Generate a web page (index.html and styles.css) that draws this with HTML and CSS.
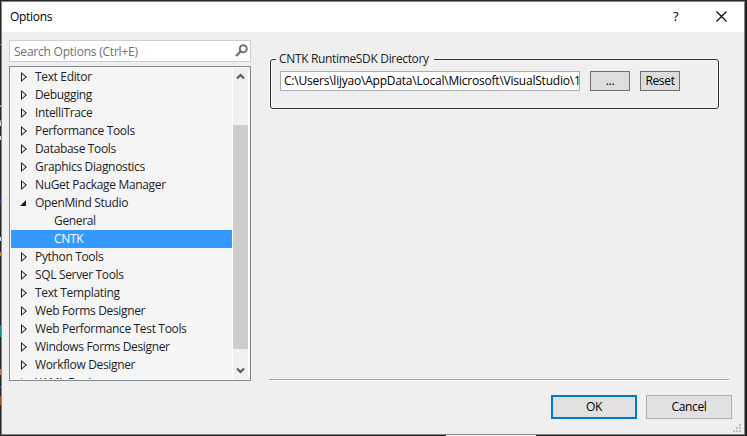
FILE: index.html
```
<!DOCTYPE html>
<html lang="en">
<head>
<meta charset="utf-8">
<title>Options</title>
<link rel="stylesheet" href="styles.css">
</head>
<body>
<div class="dialog">
  <header class="titlebar">
    <span class="title">Options</span>
    <span class="help">?</span>
    <svg class="close" width="11" height="11" viewBox="0 0 11 11"><path d="M.5 .5l10 10M10.500 .5l-10 10" fill="none" stroke="#000" stroke-width="1.1"/></svg>
  </header>
  <main class="content">
    <aside class="sidebar">
      <div class="search">
        <span>Search Options (Ctrl+E)</span>
        <svg width="13" height="13" viewBox="0 0 13 13"><circle cx="8.300" cy="4.700" r="3.500" fill="none" stroke="#717171" stroke-width="2"/><path d="M5.700 7.300L1 12" stroke="#717171" stroke-width="2.400"/></svg>
      </div>
      <div class="tree">
        <ul class="items">
          <li><i class="arrow"></i><span>Text Editor</span></li>
          <li><i class="arrow"></i><span>Debugging</span></li>
          <li><i class="arrow"></i><span>IntelliTrace</span></li>
          <li><i class="arrow"></i><span>Performance Tools</span></li>
          <li><i class="arrow"></i><span>Database Tools</span></li>
          <li><i class="arrow"></i><span>Graphics Diagnostics</span></li>
          <li><i class="arrow"></i><span>NuGet Package Manager</span></li>
          <li><i class="arrow open"></i><span>OpenMind Studio</span></li>
          <li class="child"><span>General</span></li>
          <li class="child selected"><span>CNTK</span></li>
          <li><i class="arrow"></i><span>Python Tools</span></li>
          <li><i class="arrow"></i><span>SQL Server Tools</span></li>
          <li><i class="arrow"></i><span>Text Templating</span></li>
          <li><i class="arrow"></i><span>Web Forms Designer</span></li>
          <li><i class="arrow"></i><span>Web Performance Test Tools</span></li>
          <li><i class="arrow"></i><span>Windows Forms Designer</span></li>
          <li><i class="arrow"></i><span>Workflow Designer</span></li>
          <li><i class="arrow"></i><span>XAML Designer</span></li>
        </ul>
        <div class="scrollbar">
          <svg width="9" height="7" viewBox="0 0 9 7"><path d="M1 5.500L4.500 2L8 5.500" fill="none" stroke="#555" stroke-width="2"/></svg>
          <div class="thumb"></div>
          <svg class="down" width="9" height="7" viewBox="0 0 9 7"><path d="M1 1.500L4.500 5L8 1.500" fill="none" stroke="#555" stroke-width="2"/></svg>
        </div>
      </div>
    </aside>
    <section class="page">
      <fieldset class="group">
        <legend>CNTK RuntimeSDK Directory</legend>
        <div class="path"><span>C:\Users\lijyao\AppData\Local\Microsoft\VisualStudio\14.0</span></div>
        <button class="small">...</button>
        <button class="small">Reset</button>
      </fieldset>
      <div class="rule"></div>
    </section>
  </main>
  <footer class="actions">
    <button class="primary">OK</button>
    <button>Cancel</button>
  </footer>
  <svg class="grip" width="8" height="8" viewBox="0 0 8 8" fill="#bfbfbf"><path d="M6 0h2v2h-2zM3 3h2v2h-2zM6 3h2v2h-2zM0 6h2v2h-2zM3 6h2v2h-2zM6 6h2v2h-2z"/></svg>
</div>
</body>
</html>
```
FILE: styles.css
```
* { box-sizing: border-box; }
body {
  margin: 0;
  width: 747px;
  height: 436px;
  padding: 1px 2px 1px 1px;
  overflow: hidden;
  font: 12px "Open Sans", "Noto Sans", sans-serif;
  letter-spacing: -0.34px;
  color: #1e1e1e;
  background:
    linear-gradient(#fff, #fff) 446px 435px / 90px 1px no-repeat,
    linear-gradient(#47a9d6, #47a9d6) 0 44px / 1px 1px no-repeat,
    linear-gradient(#69b7e5, #69b7e5) 0 105px / 1px 2px no-repeat,
    linear-gradient(#d17b38, #d17b38) 0 120px / 1px 2px no-repeat,
    linear-gradient(#a0e8d0, #a0e8d0) 0 122px / 1px 4px no-repeat,
    linear-gradient(#ddd, #ddd) 0 136px / 1px 4px no-repeat,
    linear-gradient(#3434a0, #3434a0) 0 199px / 1px 5px no-repeat,
    linear-gradient(#ddd, #ddd) 0 237px / 1px 4px no-repeat,
    linear-gradient(#c47a30, #c47a30) 0 252px / 1px 4px no-repeat,
    linear-gradient(#168a86, #168a86) 0 325px / 1px 12px no-repeat,
    linear-gradient(#c77a58, #c77a58) 0 369px / 1px 6px no-repeat,
    linear-gradient(#2e42a0, #2e42a0) 0 386px / 1px 2px no-repeat,
    linear-gradient(#a85428, #a85428) 0 396px / 1px 9px no-repeat,
    #242424;
}
.dialog {
  position: relative;
  height: 434px;
  border: 1px solid #858585;
  background: #efefef;
  display: flex;
  flex-direction: column;
}
.titlebar {
  height: 30px;
  flex: none;
  display: flex;
  align-items: center;
  padding: 0 17px 2px 8px;
  background: #fff;
  color: #000;
  letter-spacing: -0.3px;
}
.title { flex: 1; }
.help { width: 6px; margin-right: 37px; font-size: 13px; }
.content { display: flex; height: 349px; padding: 8px 14px 0 7px; }
.sidebar { width: 242px; }
.search {
  height: 22px;
  display: flex;
  align-items: center;
  justify-content: space-between;
  padding: 0 2px 0 4px;
  border: 1px solid #ccced7;
  background: #fff;
  color: #717171;
  letter-spacing: -0.22px;
}
.search svg { margin-bottom: 2px; }
.tree {
  height: 315px;
  margin-top: 4px;
  padding: 1px;
  display: flex;
  border: 1px solid #828790;
  background: #f5f5f5;
}
.items {
  flex: 1;
  margin: 0;
  padding: 0;
  overflow: hidden;
  list-style: none;
}
.items li {
  height: 18px;
  display: flex;
  align-items: center;
  padding-left: 10px;
  line-height: 18px;
  white-space: nowrap;
}
.items .child { padding-left: 43px; }
.items .selected { background: #3399ff; color: #fff; }
.arrow {
  width: 14px;
  height: 10px;
  flex: none;
  position: relative;
}
.arrow::before, .arrow::after {
  content: "";
  position: absolute;
  left: 0;
  top: 0;
  width: 6px;
  height: 10px;
  background: #1e1e1e;
  clip-path: polygon(0 0, 100% 50%, 0 100%);
}
.arrow::after {
  left: 1px;
  top: 2px;
  width: 3.500px;
  height: 6px;
  background: #f5f5f5;
}
.arrow.open::before {
  left: -1px;
  top: 2px;
  width: 6px;
  height: 6px;
  clip-path: polygon(100% 0, 100% 100%, 0 100%);
}
.arrow.open::after { display: none; }
.scrollbar {
  width: 17px;
  border-left: 1px solid #fff;
  border-right: 1px solid #fff;
  background: #f0f0f0;
  display: flex;
  flex-direction: column;
  align-items: center;
  padding-top: 5px;
}
.thumb { width: 15px; height: 224px; margin-top: 45px; background: #cdcdcd; }
.down { margin-top: 18px; }
.page { flex: 1; margin-left: 18px; display: flex; flex-direction: column; }
.group {
  position: relative;
  width: 449px;
  height: 50px;
  margin: 19px 0 0 1px;
  padding: 11px 9px 0;
  display: flex;
  border: 1px solid #303034;
  border-radius: 3px;
  box-shadow: 0 0 0 1px #f8f8f8, inset 0 0 0 1px #f8f8f8;
}
.group legend {
  position: absolute;
  left: 5px;
  top: -9px;
  height: 16px;
  width: 158px;
  padding: 0 3px;
  line-height: 16px;
  white-space: nowrap;
  background: #efefef;
  color: #1e1e1e;
}
.path {
  width: 300px;
  height: 20px;
  padding: 0 0 0 3px;
  border: 1px solid #abadb3;
  background: #fff;
  overflow: hidden;
  white-space: nowrap;
  line-height: 17px;
  color: #000;
  letter-spacing: -0.22px;
}
button {
  width: 86px;
  height: 24px;
  padding: 0 0 1px;
  border: 1px solid #adadad;
  background: #e1e1e1;
  color: #000;
  font: inherit;
  letter-spacing: inherit;
}
.small {
  width: 40px;
  height: 20px;
  padding: 0;
  margin-left: 10px;
  border-color: #707070;
  background: #ddd;
  line-height: 18px;
}
.rule { height: 2px; margin-top: auto; width: 460px; border-top: 1px solid #a0a0a0; background: #fff; }
.actions { display: flex; gap: 9px; justify-content: flex-end; padding: 14px 12px 0; }
.primary { border: 2px solid #0078d7; }
.grip { position: absolute; right: 3px; bottom: 2px; }
```
